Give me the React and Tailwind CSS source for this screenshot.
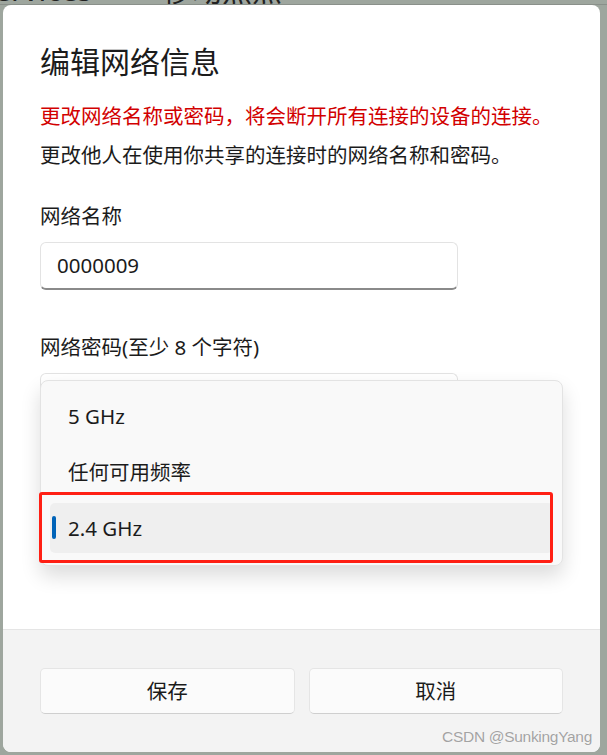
import React from 'react';

const font = { fontFamily: '"Noto Sans", "Noto Sans CJK SC", sans-serif' };

const bands = ['5 GHz', '任何可用频率', '2.4 GHz'];

const BandMenu = ({ selected }) => (
  <div className="absolute left-[37px] top-[375px] w-[523px] h-[186px] rounded-[8px] border border-[#e3e3e3] bg-[#f9f9f9] shadow-[0_10px_20px_rgba(0,0,0,0.14)] pt-[10px] flex flex-col gap-[6px]">
    {bands.map((b) => (
      <div
        key={b}
        className={`relative mx-[9px] h-[50px] rounded-[5px] flex items-center pl-[18px] text-[20.5px] text-[#1b1b1b] ${b === selected ? 'bg-[#efefef]' : ''}`}
      >
        {b === selected && (
          <span className="absolute left-[2px] top-[13px] w-[4px] h-[23px] rounded-full bg-[#0063b8]" />
        )}
        {b}
      </div>
    ))}
  </div>
);

export default function App() {
  return (
    <div className="w-[607px] h-[755px] bg-[#9ea69e] overflow-hidden" style={font}>
      {/* settings page peeking behind the dialog */}
      <div className="h-[5px] overflow-hidden flex text-[30px] leading-[30px] text-[#222] border-b border-[#8a908a]">
        <span className="-mt-[25px] -ml-[6px]">ervices</span>
        <span className="-mt-[25px] ml-[70px]">移动热点</span>
      </div>

      <div className="relative ml-[3px] w-[597px] h-[747px] rounded-[8px] bg-white flex flex-col overflow-hidden">
        <div className="flex-1 px-[37px] pt-[37px] text-[#1b1b1b]">
          <h1 className="text-[30px] leading-[40px] font-normal">编辑网络信息</h1>
          <p className="mt-[20px] text-[20.5px] leading-[28px] text-[#d20000]">
            更改网络名称或密码，将会断开所有连接的设备的连接。
          </p>
          <p className="mt-[11px] text-[20.5px] leading-[28px]">更改他人在使用你共享的连接时的网络名称和密码。</p>

          <div className="mt-[33px] text-[20.5px] leading-[28px]">网络名称</div>
          <div className="mt-[12px] w-[418px] h-[48px] rounded-[6px] border border-[#e3e3e3] border-b-2 border-b-[#8a8a8a] flex items-center pl-[16px] text-[20.5px]">
            0000009
          </div>

          <div className="mt-[43px] text-[20.5px] leading-[28px]">网络密码(至少 8 个字符)</div>
          <div className="mt-[12px] w-[418px] h-[48px] rounded-[6px] border border-[#e3e3e3] border-b-2 border-b-[#8a8a8a]" />

          {/* band combobox, covered by its open menu */}
          <div className="mt-[60px] w-[523px] h-[48px] rounded-[6px] border border-[#e3e3e3] bg-[#fbfbfb]" />
        </div>

        <div className="h-[123px] border-t border-[#e5e5e5] bg-[#f3f3f3] px-[37px] pt-[38px]">
          <div className="grid grid-cols-2 gap-[14px]">
            <button className="h-[46px] rounded-[5px] border border-[#e5e5e5] border-b-[#cfcfcf] bg-[#fbfbfb] text-[20.5px] text-[#1b1b1b]">
              保存
            </button>
            <button className="h-[46px] rounded-[5px] border border-[#e5e5e5] border-b-[#cfcfcf] bg-[#fbfbfb] text-[20.5px] text-[#1b1b1b]">
              取消
            </button>
          </div>
        </div>

        <BandMenu selected="2.4 GHz" />

        {/* highlight annotation */}
        <div className="absolute left-[36px] top-[487px] w-[514px] h-[71px] rounded-[3px] border-[3px] border-[#ff1f14]" />

        <div
          className="absolute right-[8px] bottom-[6px] text-[15.5px] leading-[18px] text-[#a3a3a3] tracking-[-0.3px] [text-shadow:0_0_1px_#fff]"
          style={{ fontFamily: '"Liberation Sans", sans-serif' }}
        >
          CSDN @SunkingYang
        </div>
      </div>
    </div>
  );
}
